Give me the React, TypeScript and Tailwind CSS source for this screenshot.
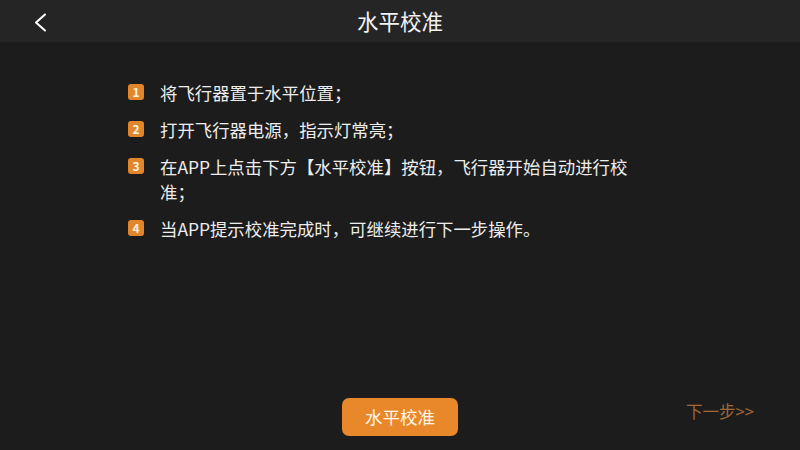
const steps = [
  '将飞行器置于水平位置；',
  '打开飞行器电源，指示灯常亮；',
  '在APP上点击下方【水平校准】按钮，飞行器开始自动进行校准；',
  '当APP提示校准完成时，可继续进行下一步操作。',
]

const font = { fontFamily: '"Noto Sans CJK SC", "Noto Sans", sans-serif' }

export default function App() {
  return (
    <div className="w-[800px] h-[450px] bg-[#1c1c1c] flex flex-col text-white" style={font}>
      <header className="h-[42px] bg-[#252525] flex items-center relative shrink-0">
        <button type="button" className="absolute left-[33px] top-[13px]" aria-label="返回">
          <svg width="14" height="19" viewBox="0 0 14 19" fill="none">
            <path d="M12 1.5 L3 9.5 L12 17.5" stroke="#ffffff" strokeWidth="2" strokeLinecap="round" strokeLinejoin="round" />
          </svg>
        </button>
        <h1 className="flex-1 text-center text-[21.5px] leading-none text-[#f2f2f2]">水平校准</h1>
      </header>

      <main className="flex-1 flex flex-col pl-[128px] pt-[38px]">
        <ol className="flex flex-col gap-[12px] w-[510px]">
          {steps.map((text, i) => (
            <li key={i} className="flex items-start gap-[16px]">
              <span className="mt-[4px] w-[16px] h-[16px] shrink-0 rounded-[3px] bg-[#e2862c] text-[12px] font-bold leading-[16px] text-center text-[#fff3df]">
                {i + 1}
              </span>
              <span className="text-[17.4px] leading-[25px] text-[#ededed]">{text}</span>
            </li>
          ))}
        </ol>
      </main>

      <footer className="h-[52px] shrink-0 flex items-start relative">
        <button
          type="button"
          className="ml-[342px] w-[116px] h-[38px] rounded-[7px] bg-[#e8882a] text-[17.5px] text-[#fff6e6]"
        >
          水平校准
        </button>
        <span className="absolute left-[686px] top-[1px] text-[16.5px] text-[#a06838]">下一步&gt;&gt;</span>
      </footer>
    </div>
  )
}
